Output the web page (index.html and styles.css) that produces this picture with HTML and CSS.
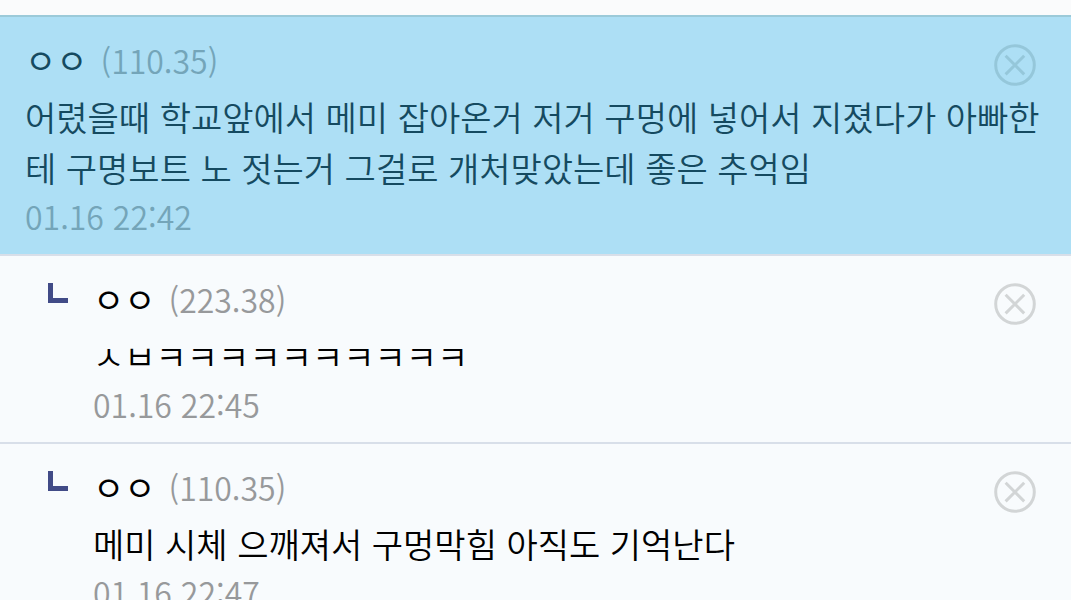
FILE: index.html
```html
<!DOCTYPE html>
<html lang="ko">
<head>
    <meta charset="utf-8">
    <title>댓글</title>
    <meta name="viewport" content="width=device-width, initial-scale=1.0">
    <link rel="stylesheet" href="styles.css">
</head>
<body>
    <ul class="comment-list">
        <li class="comment selected">
            <div class="comment-header">
                <span class="nick">ㅇㅇ</span>
                <span class="ip">(110.35)</span>
            </div>
            <p class="comment-text">어렸을때 학교앞에서 메미 잡아온거 저거 구멍에 넣어서 지졌다가 아빠한테 구명보트 노 젓는거 그걸로 개처맞았는데 좋은 추억임</p>
            <time class="date">01.16 22:42</time>
            <button type="button" class="btn-delete" aria-label="삭제">
                <svg viewBox="0 0 42 42"><circle cx="21" cy="21" r="19.3"/><path d="M11.6 11.8l18.6 18.6M30.2 11.8l-18.6 18.6"/></svg>
            </button>
        </li>
        <li class="comment reply">
            <div class="comment-header">
                <span class="nick">ㅇㅇ</span>
                <span class="ip">(223.38)</span>
            </div>
            <p class="comment-text">ㅅㅂㅋㅋㅋㅋㅋㅋㅋㅋㅋㅋ</p>
            <time class="date">01.16 22:45</time>
            <button type="button" class="btn-delete" aria-label="삭제">
                <svg viewBox="0 0 42 42"><circle cx="21" cy="21" r="19.3"/><path d="M11.6 11.8l18.6 18.6M30.2 11.8l-18.6 18.6"/></svg>
            </button>
        </li>
        <li class="comment reply">
            <div class="comment-header">
                <span class="nick">ㅇㅇ</span>
                <span class="ip">(110.35)</span>
            </div>
            <p class="comment-text">메미 시체 으깨져서 구멍막힘 아직도 기억난다</p>
            <time class="date">01.16 22:47</time>
            <button type="button" class="btn-delete" aria-label="삭제">
                <svg viewBox="0 0 42 42"><circle cx="21" cy="21" r="19.3"/><path d="M11.6 11.8l18.6 18.6M30.2 11.8l-18.6 18.6"/></svg>
            </button>
        </li>
    </ul>
</body>
</html>
```

FILE: styles.css
```css
/* 기본 */
body {
    margin: 0;
    overflow: hidden;
    background: #fafbfc;
    color: #000;
    font-family: "Noto Sans CJK KR", sans-serif;
    font-size: 34px;
    font-weight: 350;
}

/* 댓글 목록 */
.comment-list {
    margin: 15px 0 0;
    padding: 0;
    list-style: none;
}

.comment {
    position: relative;
    padding: 18px 25px 15px;
    border-top: 2px solid #d8dfe9;
    background: #f8fbfd;
}

.comment-header {
    display: flex;
    align-items: baseline;
    gap: 13px;
    line-height: 50px;
}

.nick {
    font-weight: 400;
}

.comment-text {
    margin: 6px 0 0;
    line-height: 51px;
    word-break: break-all;
}

.date {
    display: block;
    line-height: 46px;
}

.ip,
.date {
    color: #97999b;
    font-size: 32px;
}

/* 선택된 댓글 */
.selected {
    border-color: #9bcad9;
    background: #addff5;
    color: #154a60;
}

.selected .ip,
.selected .date {
    color: #74a5b9;
}

/* 답글 */
.reply {
    padding-left: 93px;
}

.reply::before {
    content: "";
    position: absolute;
    top: 27px;
    left: 48px;
    width: 15px;
    height: 15px;
    border-left: 5px solid #414b87;
    border-bottom: 5px solid #414b87;
}

/* 삭제 버튼 */
.btn-delete {
    position: absolute;
    top: 27px;
    right: 35px;
    width: 42px;
    height: 42px;
    padding: 0;
    border: none;
    background: none;
    color: #d2d5d6;
    cursor: pointer;
}

.btn-delete svg {
    display: block;
    fill: none;
    stroke: currentColor;
    stroke-width: 3;
}

.selected .btn-delete {
    color: #95c7da;
}
```
